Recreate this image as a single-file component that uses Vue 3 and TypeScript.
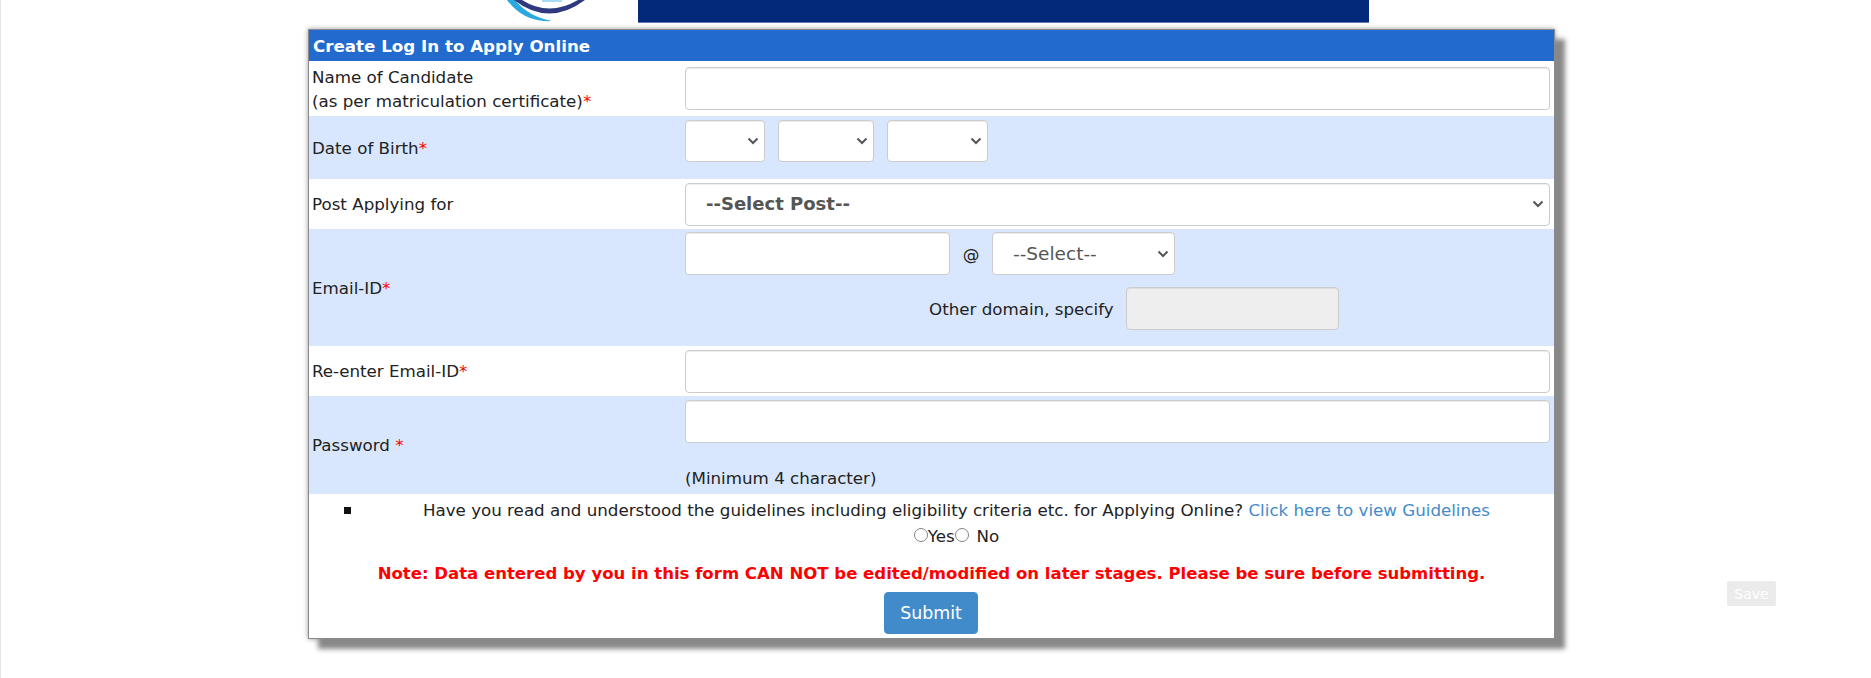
<script setup lang="ts">
const title: string = "Create Log In to Apply Online";
</script>

<template>
  <div class="page">
    <header class="top">
      <svg class="logo" width="90" height="23" viewBox="0 0 90 23" aria-hidden="true">
        <path d="M5 0 Q22 23 50 21 Q27 17 13 0 Z" fill="#29a9e0" />
        <path d="M12 0 Q47 27 83 0 L76 0 Q47 17 20 0 Z" fill="#2f3a7e" />
        <rect x="40" y="0" width="20" height="2" fill="#a8dcf5" />
      </svg>
      <div class="banner"></div>
    </header>

    <form class="card" @submit.prevent>
      <div class="heading">{{ title }}</div>

      <div class="row r-name">
        <label class="lab">Name of Candidate<br />(as per matriculation certificate)<span class="req">*</span></label>
        <div class="fields"><input class="ctl full" type="text" /></div>
      </div>

      <div class="row alt r-dob">
        <label class="lab">Date of Birth<span class="req">*</span></label>
        <div class="fields dob">
          <select class="ctl day"><option></option></select>
          <select class="ctl month"><option></option></select>
          <select class="ctl year"><option></option></select>
        </div>
      </div>

      <div class="row r-post">
        <label class="lab">Post Applying for</label>
        <div class="fields">
          <select class="ctl full post"><option>--Select Post--</option></select>
        </div>
      </div>

      <div class="row alt r-email">
        <label class="lab">Email-ID<span class="req">*</span></label>
        <div class="fields">
          <div class="email-line">
            <input class="ctl email" type="text" />
            <span class="at">@</span>
            <select class="ctl domain"><option>--Select--</option></select>
          </div>
          <div class="other-line">
            <span>Other domain, specify</span>
            <input class="ctl other" type="text" disabled />
          </div>
        </div>
      </div>

      <div class="row r-re">
        <label class="lab">Re-enter Email-ID<span class="req">*</span></label>
        <div class="fields"><input class="ctl full" type="text" /></div>
      </div>

      <div class="row alt r-pass">
        <label class="lab">Password <span class="req">*</span></label>
        <div class="fields">
          <input class="ctl full" type="password" />
          <div class="hint">(Minimum 4 character)</div>
        </div>
      </div>

      <div class="foot">
        <ul class="guide">
          <li>
            Have you read and understood the guidelines including eligibility criteria etc. for Applying Online?
            <a class="link" href="#">Click here to view Guidelines</a>
          </li>
        </ul>
        <div class="radios">
          <input type="radio" name="read" /><span>Yes</span><input type="radio" name="read" /><span class="no">No</span>
        </div>
        <p class="note">Note: Data entered by you in this form CAN NOT be edited/modified on later stages. Please be sure before submitting.</p>
        <button class="submit" type="submit">Submit</button>
      </div>
    </form>

    <button class="save" type="button">Save</button>
  </div>
</template>

<style scoped>
.page {
  position: relative;
  box-sizing: border-box;
  height: 678px;
  overflow: hidden;
  border-left: 1px solid #e6e6e6;
  background: #fff;
  font-family: "DejaVu Sans", Verdana, sans-serif;
  font-size: 16.7px;
  line-height: 24px;
  color: #222;
}
.top {
  display: flex;
  height: 23px;
  padding-left: 501px;
}
.logo {
  flex: none;
  width: 90px;
}
.banner {
  width: 731px;
  margin-left: 46px;
  background: #03297a;
  border-bottom: 1px solid #5f7ab5;
  box-sizing: border-box;
}
.card {
  box-sizing: border-box;
  width: 1247px;
  height: 610px;
  margin: 6px 0 0 307px;
  border: 1px solid #8a8a8a;
  background: #fff;
  box-shadow: 10px 10px 5px #888, 0 0 5px #999;
}
.heading {
  height: 31px;
  padding-left: 4px;
  background: #226ace;
  color: #fff;
  font-weight: 700;
  line-height: 32px;
}
.row {
  display: grid;
  grid-template-columns: 376px 865px;
  align-items: center;
}
.alt {
  background: #d8e7fd;
}
.lab {
  padding-left: 3px;
}
.req {
  color: #f00;
}
.fields {
  min-width: 0;
}
.ctl {
  box-sizing: border-box;
  display: block;
  height: 43px;
  border: 1px solid #ccc;
  border-radius: 4px;
  background-color: #fff;
  box-shadow: inset 0 1px 1px rgba(0, 0, 0, 0.075);
  font: inherit;
  color: #555;
  margin: 0;
}
select.ctl {
  appearance: none;
  padding-left: 20px;
  background-image: url("data:image/svg+xml,%3Csvg xmlns='http://www.w3.org/2000/svg' width='12' height='8' viewBox='0 0 12 8'%3E%3Cpath d='M1.5 1.5 6 6l4.5-4.5' fill='none' stroke='%23555' stroke-width='2'/%3E%3C/svg%3E");
  background-repeat: no-repeat;
  background-position: right 5px center;
}
.full {
  width: 100%;
}
.r-name { height: 55px; }
.r-dob { height: 63px; }
.r-post { height: 50px; }
.r-email { height: 117px; }
.r-re { height: 50px; }
.r-pass { height: 98px; }
.dob {
  display: flex;
  gap: 13px;
  align-self: start;
  padding-top: 4px;
}
.dob .ctl {
  height: 42px;
}
.day { width: 80px; }
.month { width: 96px; }
.year { width: 101px; }
.post {
  font-weight: 700;
  font-size: 18px;
}
.r-email .fields {
  align-self: start;
  padding-top: 3px;
}
.email-line {
  display: flex;
  align-items: center;
}
.email { width: 265px; }
.at {
  width: 42px;
  text-align: center;
}
.domain {
  width: 183px;
  font-size: 18.5px;
}
.other-line {
  display: flex;
  align-items: center;
  gap: 12px;
  margin-top: 12px;
  margin-left: 244px;
}
.other {
  width: 213px;
  background-color: #eee;
}
.r-pass .fields {
  align-self: start;
  padding-top: 4px;
}
.hint {
  margin-top: 23px;
}
.foot {
  text-align: center;
}
.guide {
  margin: 0;
  padding: 4px 0 0 50px;
  list-style: none;
}
.guide li {
  position: relative;
}
.guide li::before {
  content: "";
  position: absolute;
  left: -15px;
  top: 9px;
  width: 7px;
  height: 7px;
  background: #111;
}
.link {
  color: #428bca;
  text-decoration: none;
}
.radios {
  display: flex;
  justify-content: center;
  align-items: center;
  height: 26px;
  margin-top: 1px;
  padding-left: 50px;
}
.radios input {
  appearance: none;
  box-sizing: border-box;
  margin: 0 0 2px;
  width: 14px;
  height: 14px;
  border: 1px solid #858585;
  border-radius: 50%;
  background: #fff;
}
.no {
  margin-left: 8px;
}
.note {
  margin: 11px 0 0;
  color: #f00;
  font-weight: 700;
  font-size: 16.55px;
  line-height: 27px;
}
.submit {
  display: block;
  box-sizing: border-box;
  width: 94px;
  height: 42px;
  margin: 5px 0 0 575px;
  border: 1px solid #428bca;
  border-radius: 4px;
  background: #428bca;
  color: #fff;
  font: inherit;
  font-size: 17.4px;
}
.save {
  position: absolute;
  left: 1726px;
  top: 581px;
  box-sizing: border-box;
  width: 49px;
  height: 25px;
  padding: 0;
  border: 0;
  border-radius: 2px;
  background: #ebebeb;
  color: #fff;
  font: inherit;
  font-size: 14px;
}
</style>
